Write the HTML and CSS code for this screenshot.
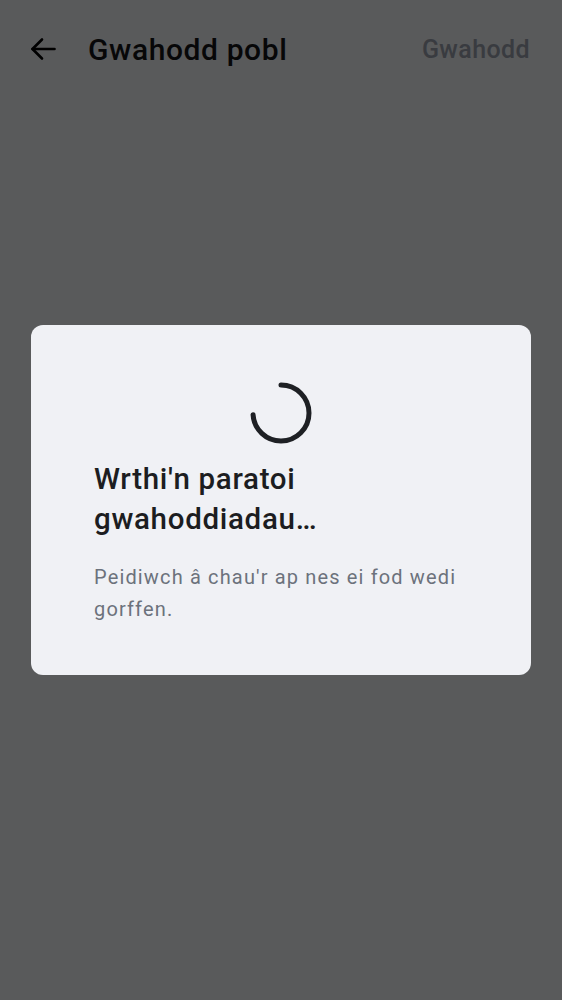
FILE: index.html
```html
<!DOCTYPE html>
<html lang="cy">
<head>
<meta charset="utf-8">
<title>Gwahodd pobl</title>
<link rel="stylesheet" href="styles.css">
</head>
<body>
<div class="screen">
  <header class="topbar">
    <button class="back" aria-label="Yn ôl">
      <svg width="26" height="24" viewBox="0 0 26 24" fill="none" stroke="#000" stroke-width="2.6" stroke-linecap="round" stroke-linejoin="round">
        <path d="M2.5 12H24.5"/>
        <path d="M12 2.5L2.5 12L12 21.5"/>
      </svg>
    </button>
    <h1 class="title">Gwahodd pobl</h1>
    <span class="action">Gwahodd</span>
  </header>
  <div class="overlay">
    <div class="dialog">
      <div class="spinner-wrap">
        <svg class="spinner" width="62" height="62" viewBox="0 0 62 62">
          <circle cx="31" cy="31" r="28" fill="none" stroke="#1e2024" stroke-width="5" stroke-linecap="round" stroke-dasharray="130 46" transform="rotate(-90 31 31)"/>
        </svg>
      </div>
      <h2 class="dlg-title">Wrthi'n paratoi gwahoddiadau…</h2>
      <p class="dlg-text">Peidiwch â chau'r ap nes ei fod wedi gorffen.</p>
    </div>
  </div>
</div>
</body>
</html>
```
FILE: styles.css
```css
* { box-sizing: border-box; }
html, body { margin: 0; padding: 0; }
body {
  font-family: Roboto, "Noto Sans", "Liberation Sans", sans-serif;
  background: #f2f3f7;
  width: 562px;
  height: 1000px;
  overflow: hidden;
}
.screen {
  position: relative;
  width: 562px;
  height: 1000px;
}
.topbar {
  display: flex;
  align-items: center;
  height: 98px;
  padding: 0 32px 0 30px;
}
.back {
  display: flex;
  align-items: center;
  justify-content: center;
  background: none;
  border: 0;
  padding: 0;
  margin: 0 32px 0 0;
  width: 26px;
  height: 24px;
}
.title {
  margin: 0;
  flex: 1;
  font-size: 30px;
  font-weight: 500;
  letter-spacing: 0.6px;
  color: #141518;
}
.action {
  font-size: 25px;
  font-weight: 500;
  letter-spacing: 0.4px;
  color: #9aa1ad;
}
.overlay {
  position: absolute;
  inset: 0;
  background: rgba(0, 0, 0, 0.63);
  display: flex;
  align-items: center;
  justify-content: center;
}
.dialog {
  width: 500px;
  height: 350px;
  background: #f0f1f5;
  border-radius: 12px;
  padding: 57px 63px 0 63px;
}
.spinner-wrap {
  display: flex;
  justify-content: center;
}
.spinner { display: block; }
.dlg-title {
  margin: 15px 0 0 0;
  font-size: 29.5px;
  line-height: 40px;
  font-weight: 500;
  letter-spacing: 0.7px;
  color: #1c1d21;
}
.dlg-text {
  margin: 23px 0 0 0;
  font-size: 20px;
  line-height: 31.5px;
  color: #6c727c;
  letter-spacing: 1.15px;
}
```
